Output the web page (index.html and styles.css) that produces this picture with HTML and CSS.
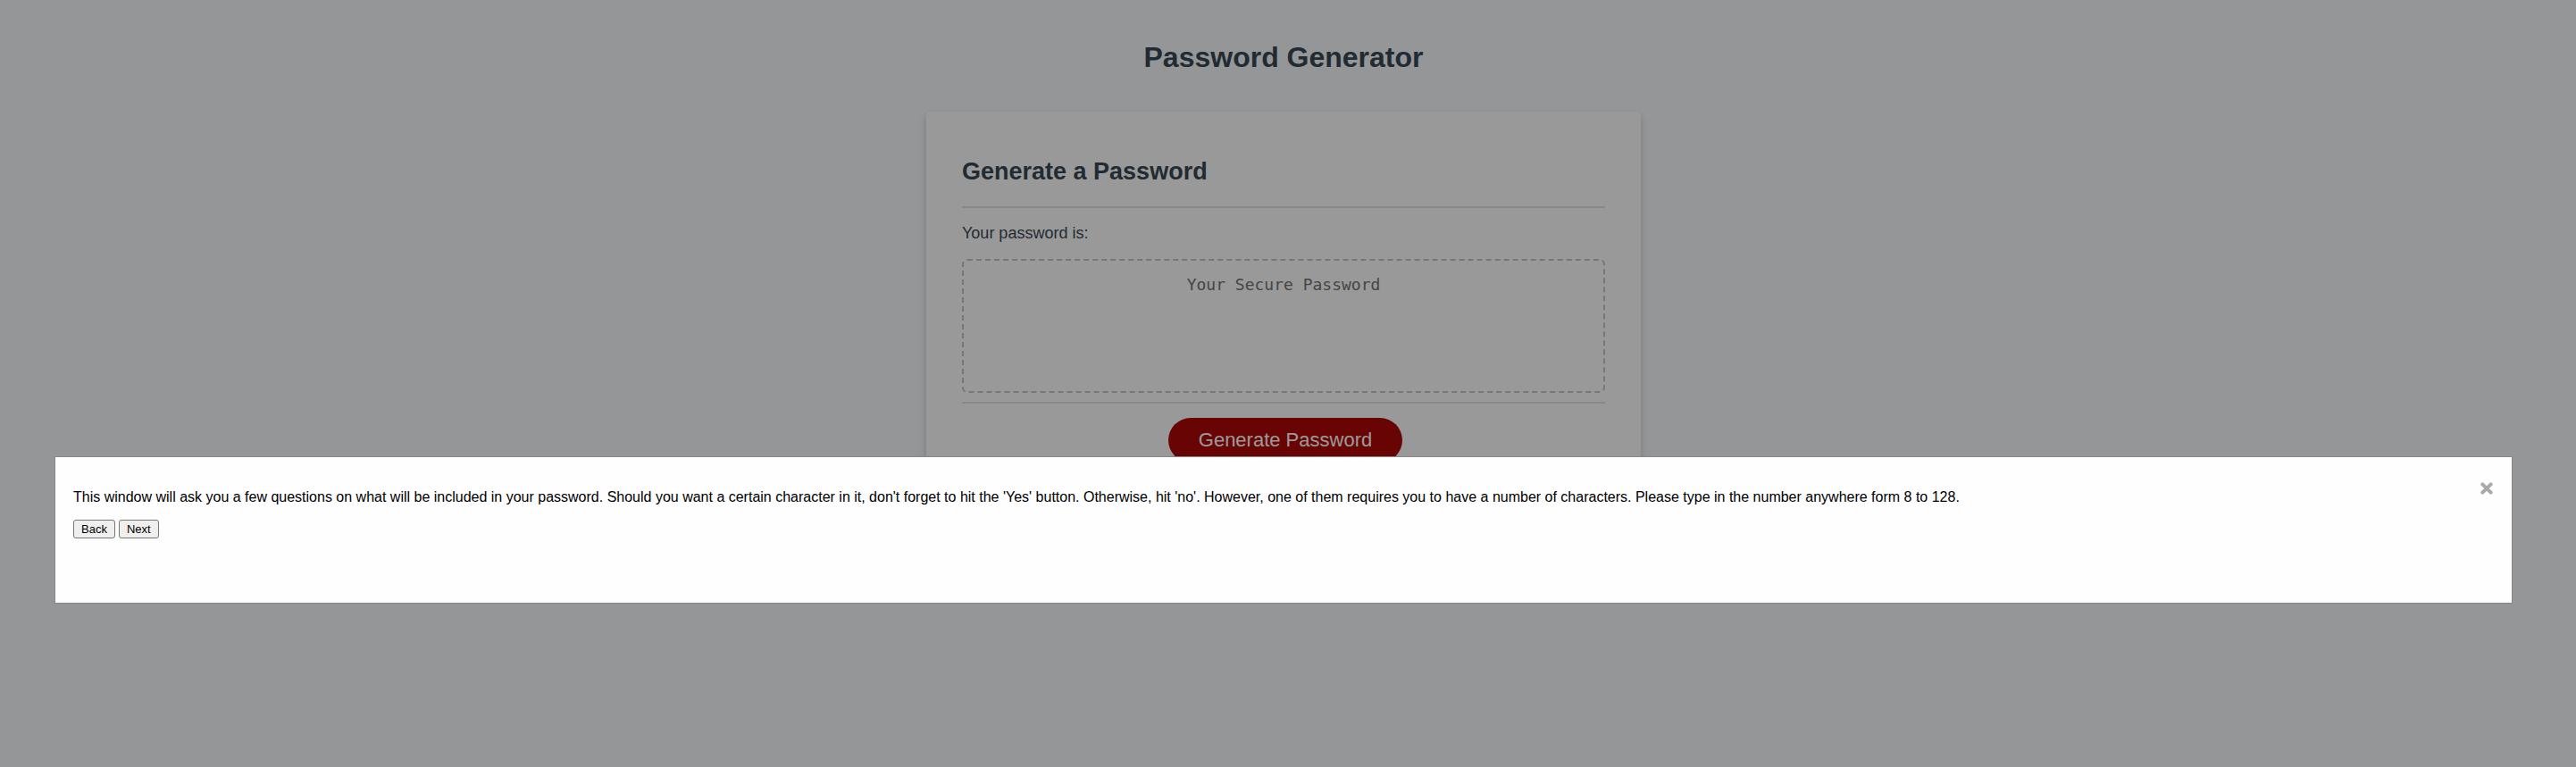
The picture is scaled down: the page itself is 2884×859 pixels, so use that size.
FILE: index.html
```
<!DOCTYPE html>
<html lang="en">
<head>
<meta charset="UTF-8">
<meta name="viewport" content="width=device-width, initial-scale=1">
<title>Password Generator</title>
<link rel="stylesheet" href="styles.css">
</head>
<body>
<div class="wrapper">
  <header class="page-header">
    <h1>Password Generator</h1>
  </header>
  <main class="card">
    <div class="card-header">
      <h2>Generate a Password</h2>
    </div>
    <div class="card-body">
      <label class="caption" for="password">Your password is:</label>
      <textarea id="password" readonly placeholder="Your Secure Password"></textarea>
    </div>
    <div class="card-footer">
      <button class="generate" type="button">Generate Password</button>
    </div>
  </main>
</div>
<div class="overlay">
  <section class="dialog" role="dialog" aria-modal="true" aria-label="Password options">
    <div class="dialog-main">
      <p class="message">This window will ask you a few questions on what will be included in your password. Should you want a certain character in it, don't forget to hit the 'Yes' button. Otherwise, hit 'no'. However, one of them requires you to have a number of characters. Please type in the number anywhere form 8 to 128.</p>
      <div class="actions">
        <button class="step" type="button">Back</button>
        <button class="step" type="button">Next</button>
      </div>
    </div>
    <button class="close" type="button" aria-label="Close">
      <svg viewBox="0 0 16 16" aria-hidden="true"><path d="M3.3 3.3 12.7 12.7M12.7 3.3 3.3 12.7"/></svg>
    </button>
  </section>
</div>
</body>
</html>
```
FILE: styles.css
```
* { box-sizing: border-box; }

html, body { margin: 0; min-height: 100%; }

body {
  background: #f9fbfd;
  color: hsl(206, 17%, 28%);
  font-family: Arial, "Liberation Sans", sans-serif;
  font-size: 18px;
  padding-right: 10px;
}

.wrapper { padding: 26px 20px 0; }

.page-header { padding: 20px; text-align: center; }

h1 { margin: 0 0 22px; font-size: 32px; line-height: 37px; }

.card {
  max-width: 800px;
  margin: 0 auto;
  padding: 32px 40px;
  background: #fff;
  border-radius: 5px;
  box-shadow: rgba(60, 66, 87, .12) 0 7px 14px 0, rgba(0, 0, 0, .12) 0 3px 6px 0;
}

.card-header { padding: 19px 0 23px; border-bottom: 2px solid #e3e3e3; }

h2 { margin: 0; font-size: 27px; line-height: 32px; }

.card-body {
  display: flex;
  flex-direction: column;
  padding: 18px 0 10px;
  border-bottom: 2px solid #e3e3e3;
}

.caption { margin-bottom: 18px; line-height: 21px; }

textarea {
  display: block;
  width: 100%;
  height: 150px;
  padding: 16px;
  border: 2px dashed #c7c7c7;
  border-radius: 6px;
  background: transparent;
  font: 18px "DejaVu Sans Mono", monospace;
  text-align: center;
  resize: none;
  overflow: hidden;
}

textarea::placeholder { color: #757575; }

.card-footer { padding: 16px 0 0 4px; text-align: center; }

.generate {
  padding: 12px 34px;
  border: 0;
  border-radius: 25px;
  background: hsl(360, 91%, 36%);
  color: #fff;
  font: 22px/26px Arial, "Liberation Sans", sans-serif;
}

.overlay {
  position: fixed;
  inset: 0;
  padding: 512px 72px 0 62px;
  background: rgba(0, 0, 0, .4);
}

.dialog {
  display: flex;
  align-items: flex-start;
  justify-content: space-between;
  min-height: 163px;
  padding: 20px;
  background: #fefefe;
  outline: 1px solid #888;
  color: #000;
}

.message { margin: 0 0 16px; padding-top: 16px; font-size: 16px; line-height: 18px; }

.actions { display: flex; gap: 4px; }

.step {
  padding: 1px 8px;
  border: 1px solid #767676;
  border-radius: 3px;
  background: #efefef;
  color: #000;
  font: 13px/17px Arial, "Liberation Sans", sans-serif;
}

.close { padding: 7px 0; border: 0; background: none; color: #aaa; }

.close svg { display: block; width: 16px; height: 16px; }

.close path { fill: none; stroke: currentColor; stroke-width: 4; stroke-linecap: round; }
```
